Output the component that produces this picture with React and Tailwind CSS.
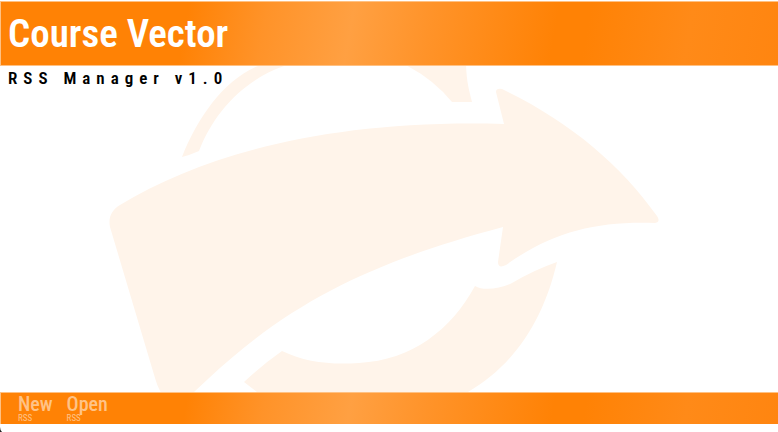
const band =
  "bg-[linear-gradient(100deg,#ff8205_0%,#ff8205_24%,#ff9329_34%,#ffa042_45%,#ff9329_55%,#ff8205_71%,#ff8205_75%,#ff8a18_88%,#ff8510_100%)]";

function Watermark() {
  return (
    <svg
      aria-hidden="true"
      className="absolute inset-0 h-full w-full"
      viewBox="0 66 778 326"
      preserveAspectRatio="xMidYMid slice"
      fill="#fff4ea"
    >
      <path d="M182 157C198 117 224 80 258 66V50H345V66H284C244 80 214 112 199 151Q190 155 182 157Z" />
      <path d="M395 60Q430 75 452 102H472C469 90 466 80 466 60Z" />
      <path d="M120 205C204 154 330 119 504 124L496 92Q496 88 502 89C569 121 620 164 657 216Q661 222 655 223C596 221 552 232 506 265Q498 269 498 262L503 227C380 260 294 298 208 379L194 392L184 402H168Q159 393 155 378L110 227C108 217 112 210 120 205Z" />
      <path d="M244 382Q262 365 282 351C305 362 330 365 359 363C412 360 451 330 475 286C483 291 500 289 512 283Q534 270 557 262C544 318 516 364 468 392L450 402H270Z" />
    </svg>
  );
}

function FeedButton({ label }) {
  return (
    <button type="button" className="flex flex-col items-start text-[#ffc387]">
      <span className="text-[20px] leading-[20px] font-medium">{label}</span>
      <span className="text-[9px] leading-[9px]">RSS</span>
    </button>
  );
}

export default function App() {
  return (
    <div className="flex h-screen flex-col overflow-hidden bg-white font-['Roboto_Condensed','Liberation_Sans_Narrow','Liberation_Sans',sans-serif]">
      <header
        className={`mt-px flex h-[65px] shrink-0 items-center border-y border-l border-[#ffc183] bg-origin-border px-[7px] ${band}`}
      >
        <h1 className="text-[39px] leading-[48px] font-semibold whitespace-nowrap text-white">
          Course Vector
        </h1>
      </header>
      <main className="relative min-h-0 flex-1">
        <Watermark />
        <p className="relative px-2 text-[17px] leading-[24px] font-semibold tracking-[6px] whitespace-nowrap text-black">
          RSS Manager v1.0
        </p>
      </main>
      <footer>
        <nav
          className={`flex h-[32px] items-center gap-[14px] border-t border-l border-[#ffc183] bg-origin-border px-[17px] ${band}`}
        >
          <FeedButton label="New" />
          <FeedButton label="Open" />
        </nav>
        <div className="flex h-2 items-end">
          <svg aria-hidden="true" className="h-[5px] w-[2px]" viewBox="0 0 2 5">
            <path d="M0 0Q0 3 2 5H0Z" fill="#222" />
          </svg>
        </div>
      </footer>
    </div>
  );
}
